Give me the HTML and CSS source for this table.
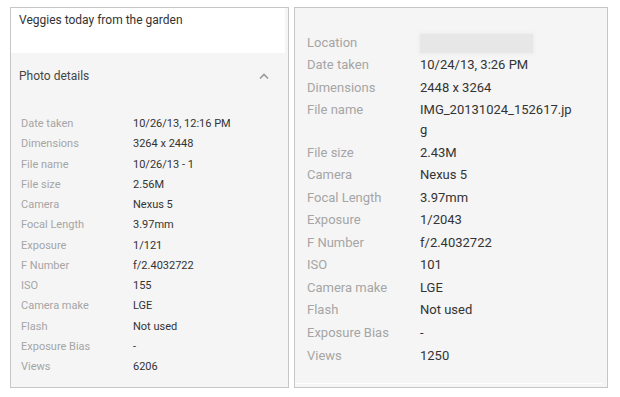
FILE: index.html
```html
<!DOCTYPE html>
<html lang="en">
<head>
    <meta charset="UTF-8">
    <title>Photo details</title>
    <link rel="stylesheet" href="styles.css">
</head>
<body>

    <div class="panels">

        <div class="panel panel-small">
            <div class="caption">Veggies today from the garden</div>
            <div class="details-header">
                <span>Photo details</span>
                <svg class="chevron" width="10" height="6" viewBox="0 0 10 6"><polyline points="1,5.5 5,1.5 9,5.5" fill="none" stroke="#9a9a9a" stroke-width="1.6"/></svg>
            </div>
            <div class="details">
                <div class="row"><span class="label">Date taken</span><span class="value">10/26/13, 12:16 PM</span></div>
                <div class="row"><span class="label">Dimensions</span><span class="value">3264 x 2448</span></div>
                <div class="row"><span class="label">File name</span><span class="value">10/26/13 - 1</span></div>
                <div class="row"><span class="label">File size</span><span class="value">2.56M</span></div>
                <div class="row"><span class="label">Camera</span><span class="value">Nexus 5</span></div>
                <div class="row"><span class="label">Focal Length</span><span class="value">3.97mm</span></div>
                <div class="row"><span class="label">Exposure</span><span class="value">1/121</span></div>
                <div class="row"><span class="label">F Number</span><span class="value">f/2.4032722</span></div>
                <div class="row"><span class="label">ISO</span><span class="value">155</span></div>
                <div class="row"><span class="label">Camera make</span><span class="value">LGE</span></div>
                <div class="row"><span class="label">Flash</span><span class="value">Not used</span></div>
                <div class="row"><span class="label">Exposure Bias</span><span class="value">-</span></div>
                <div class="row"><span class="label">Views</span><span class="value">6206</span></div>
            </div>
        </div>

        <div class="panel panel-large">
            <div class="details">
                <div class="row"><span class="label">Location</span><span class="value"><span class="blurred"></span></span></div>
                <div class="row"><span class="label">Date taken</span><span class="value">10/24/13, 3:26 PM</span></div>
                <div class="row"><span class="label">Dimensions</span><span class="value">2448 x 3264</span></div>
                <div class="row"><span class="label">File name</span><span class="value">IMG_20131024_152617.jpg</span></div>
                <div class="row"><span class="label">File size</span><span class="value">2.43M</span></div>
                <div class="row"><span class="label">Camera</span><span class="value">Nexus 5</span></div>
                <div class="row"><span class="label">Focal Length</span><span class="value">3.97mm</span></div>
                <div class="row"><span class="label">Exposure</span><span class="value">1/2043</span></div>
                <div class="row"><span class="label">F Number</span><span class="value">f/2.4032722</span></div>
                <div class="row"><span class="label">ISO</span><span class="value">101</span></div>
                <div class="row"><span class="label">Camera make</span><span class="value">LGE</span></div>
                <div class="row"><span class="label">Flash</span><span class="value">Not used</span></div>
                <div class="row"><span class="label">Exposure Bias</span><span class="value">-</span></div>
                <div class="row"><span class="label">Views</span><span class="value">1250</span></div>
            </div>
            <div class="panel-foot"></div>
        </div>

    </div>

</body>
</html>
```

FILE: styles.css
```css
* { box-sizing: border-box; margin: 0; padding: 0; font-family: Roboto, "Liberation Sans", sans-serif; }
body {
    background: #fff;
}
.panels {
    display: flex;
    align-items: flex-start;
    gap: 5px;
    padding: 7px 0 0 10px;
}
.panel {
    height: 381px;
    background: #f5f5f5;
    border: 1px solid #c6c6c6;
    display: flex;
    flex-direction: column;
}
.panel-small {
    width: 279px;
}
.panel-large {
    width: 314px;
}
.caption {
    height: 45px;
    margin-right: 3px;
    background: #fff;
    padding: 4px 0 0 8px;
    font-size: 12px;
    line-height: 16px;
    color: #333;
}
.details-header {
    display: flex;
    justify-content: space-between;
    align-items: center;
    padding: 15px 19px 0 8px;
    font-size: 12px;
    line-height: 16px;
    color: #444;
}
.chevron {
    display: block;
}
.panel-small .details {
    padding: 30px 0 0 10px;
}
.panel-small .row {
    font-size: 11px;
    line-height: 20.25px;
}
.panel-large .details {
    padding: 23.3px 0 0 12px;
}
.panel-large .row {
    font-size: 13px;
    line-height: 20px;
    padding: 1.27px 0;
}
.panel-large .value {
    flex: none;
    width: 154px;
}
.row {
    display: flex;
}
.label {
    width: 113px;
    flex-shrink: 0;
    color: #a5a5a5;
}
.panel-small .label {
    width: 112px;
}
.value {
    flex: 1;
    color: #333;
    word-break: break-all;
}
.blurred {
    display: inline-block;
    vertical-align: middle;
    width: 113px;
    height: 19px;
    background: #e7e7e7;
    box-shadow: 0 0 3px 1px #ececec;
}
.panel-foot {
    margin-top: auto;
    margin-bottom: 3px;
    margin-right: 5px;
    height: 1px;
    background: #fff;
}
```
